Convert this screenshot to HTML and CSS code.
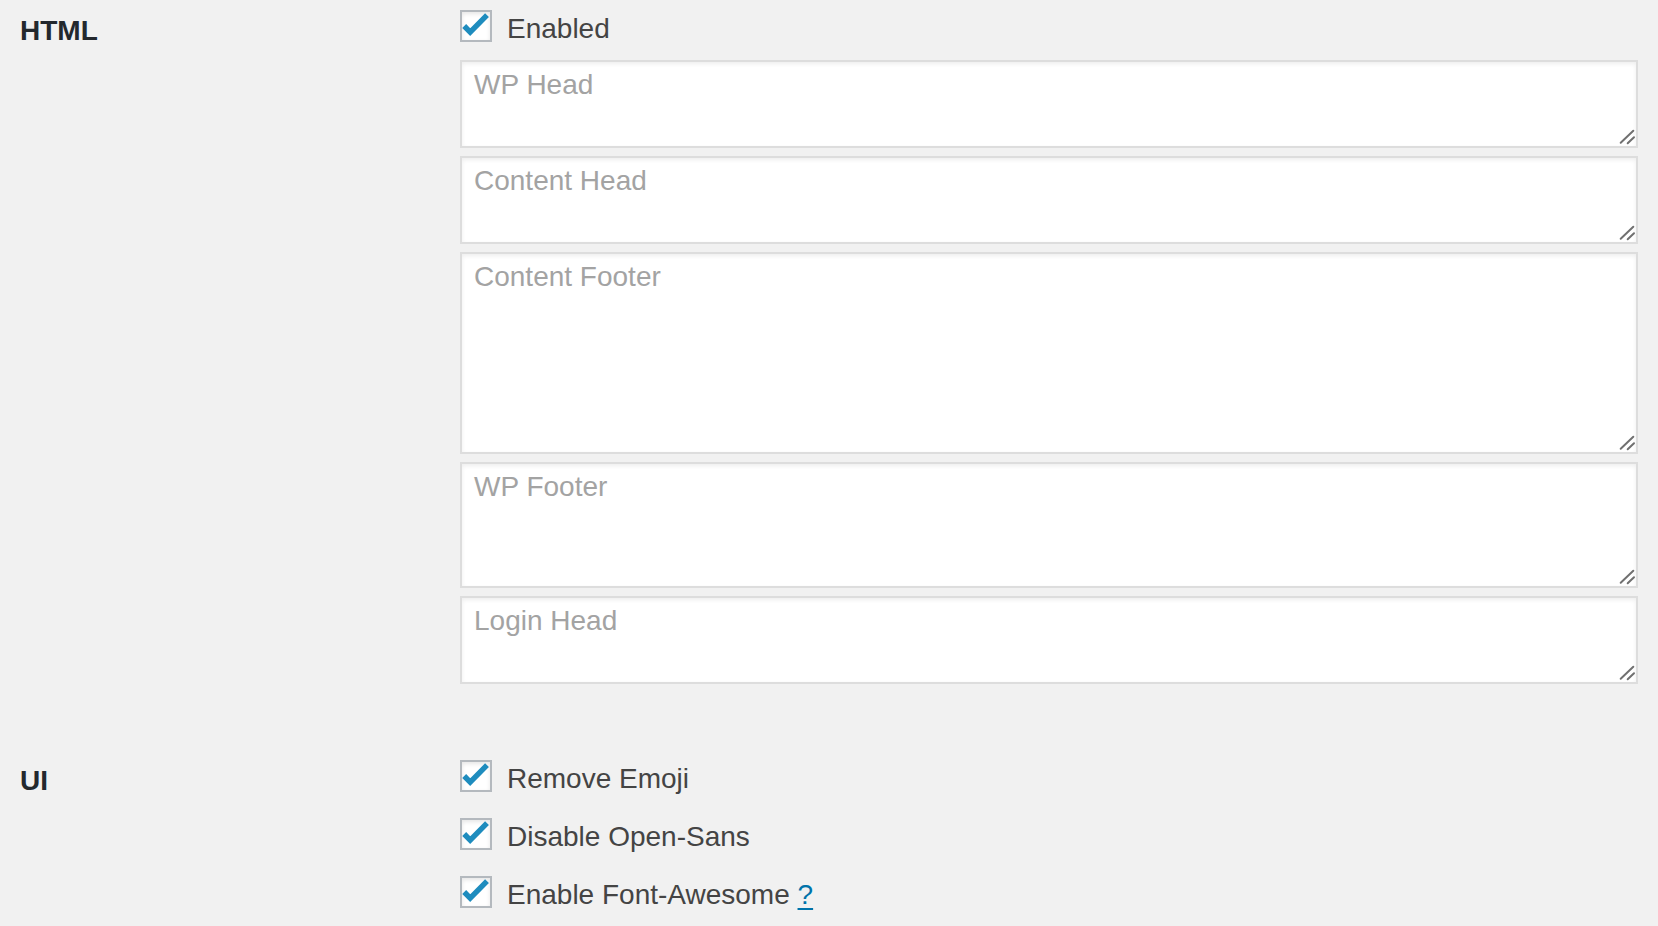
FILE: index.html
```html
<!DOCTYPE html>
<html lang="en">
<head>
<meta charset="utf-8">
<title>Settings</title>
<link rel="stylesheet" href="styles.css">
</head>
<body>
<div class="settings">
  <section class="row">
    <div class="th">HTML</div>
    <div class="td">
      <label class="check">
        <span class="cb"><svg viewBox="2 2 28 28" width="28" height="28"><polyline points="4.2,16 10.2,22.2 27,5.2" fill="none" stroke="#1e8cbe" stroke-width="5.4" stroke-linejoin="miter"/></svg></span>
        <span class="check-text">Enabled</span>
      </label>
      <div class="fields">
        <div class="ta-wrap"><textarea class="ta h-sm" placeholder="WP Head"></textarea><svg class="grip" viewBox="0 0 20 20" width="20" height="20"><line x1="4.7" y1="16.7" x2="17.3" y2="4.7"/><line x1="11.7" y1="17.3" x2="18" y2="11.3"/></svg></div>
        <div class="ta-wrap"><textarea class="ta h-sm" placeholder="Content Head"></textarea><svg class="grip" viewBox="0 0 20 20" width="20" height="20"><line x1="4.7" y1="16.7" x2="17.3" y2="4.7"/><line x1="11.7" y1="17.3" x2="18" y2="11.3"/></svg></div>
        <div class="ta-wrap"><textarea class="ta h-lg" placeholder="Content Footer"></textarea><svg class="grip" viewBox="0 0 20 20" width="20" height="20"><line x1="4.7" y1="16.7" x2="17.3" y2="4.7"/><line x1="11.7" y1="17.3" x2="18" y2="11.3"/></svg></div>
        <div class="ta-wrap"><textarea class="ta h-md" placeholder="WP Footer"></textarea><svg class="grip" viewBox="0 0 20 20" width="20" height="20"><line x1="4.7" y1="16.7" x2="17.3" y2="4.7"/><line x1="11.7" y1="17.3" x2="18" y2="11.3"/></svg></div>
        <div class="ta-wrap"><textarea class="ta h-sm" placeholder="Login Head"></textarea><svg class="grip" viewBox="0 0 20 20" width="20" height="20"><line x1="4.7" y1="16.7" x2="17.3" y2="4.7"/><line x1="11.7" y1="17.3" x2="18" y2="11.3"/></svg></div>
      </div>
    </div>
  </section>
  <section class="row row-ui">
    <div class="th">UI</div>
    <div class="td checks">
      <label class="check">
        <span class="cb"><svg viewBox="2 2 28 28" width="28" height="28"><polyline points="4.2,16 10.2,22.2 27,5.2" fill="none" stroke="#1e8cbe" stroke-width="5.4" stroke-linejoin="miter"/></svg></span>
        <span class="check-text">Remove Emoji</span>
      </label>
      <label class="check">
        <span class="cb"><svg viewBox="2 2 28 28" width="28" height="28"><polyline points="4.2,16 10.2,22.2 27,5.2" fill="none" stroke="#1e8cbe" stroke-width="5.4" stroke-linejoin="miter"/></svg></span>
        <span class="check-text">Disable Open-Sans</span>
      </label>
      <label class="check">
        <span class="cb"><svg viewBox="2 2 28 28" width="28" height="28"><polyline points="4.2,16 10.2,22.2 27,5.2" fill="none" stroke="#1e8cbe" stroke-width="5.4" stroke-linejoin="miter"/></svg></span>
        <span class="check-text">Enable Font-Awesome <a class="help" href="#">?</a></span>
      </label>
    </div>
  </section>
</div>
</body>
</html>
```

FILE: styles.css
```css
html, body {
  margin: 0;
  padding: 0;
  background: #f1f1f1;
}

body {
  font-family: "Liberation Sans", Arial, Helvetica, sans-serif;
  color: #444;
}

.settings {
  padding: 0 20px 18px;
}

.row {
  display: grid;
  grid-template-columns: 440px 1fr;
}

.row-ui {
  margin-top: 66px;
}

.th {
  padding-top: 15px;
  font-size: 28px;
  line-height: 32px;
  font-weight: bold;
  color: #23282d;
}

.td {
  padding-top: 10px;
}

.checks {
  display: flex;
  flex-direction: column;
  gap: 26px;
}

.check {
  display: flex;
  align-items: flex-start;
  height: 32px;
  font-size: 28px;
  line-height: 32px;
  color: #444;
  cursor: pointer;
}

.cb {
  box-sizing: border-box;
  width: 32px;
  height: 32px;
  flex: none;
  border: 2px solid #b4b9be;
  background: #fff;
  box-shadow: inset 0 2px 4px rgba(0, 0, 0, 0.1);
  display: flex;
}

.cb svg {
  display: block;
}

.check-text {
  margin-left: 15px;
  padding-top: 3px;
  white-space: nowrap;
}

.help {
  color: #0073aa;
  text-decoration: underline;
  text-decoration-thickness: 2px;
  text-underline-offset: 4px;
}

.fields {
  margin-top: 18px;
  display: flex;
  flex-direction: column;
  gap: 8px;
}

.ta-wrap {
  position: relative;
}

.ta {
  display: block;
  box-sizing: border-box;
  width: 100%;
  margin: 0;
  padding: 6px 12px 4px;
  border: 2px solid #ddd;
  background: #fff;
  box-shadow: inset 0 2px 4px rgba(0, 0, 0, 0.07);
  font-family: "Liberation Sans", Arial, Helvetica, sans-serif;
  font-size: 28px;
  line-height: 34px;
  color: #32373c;
  resize: none;
  outline: none;
}

.ta::placeholder {
  color: #a3a3a3;
  opacity: 1;
}

.h-sm { height: 88px; }
.h-md { height: 126px; }
.h-lg { height: 202px; }

.grip {
  position: absolute;
  right: 2px;
  bottom: 2px;
  pointer-events: none;
}

.grip line {
  stroke: #707070;
  stroke-width: 2;
  stroke-linecap: round;
}
```
